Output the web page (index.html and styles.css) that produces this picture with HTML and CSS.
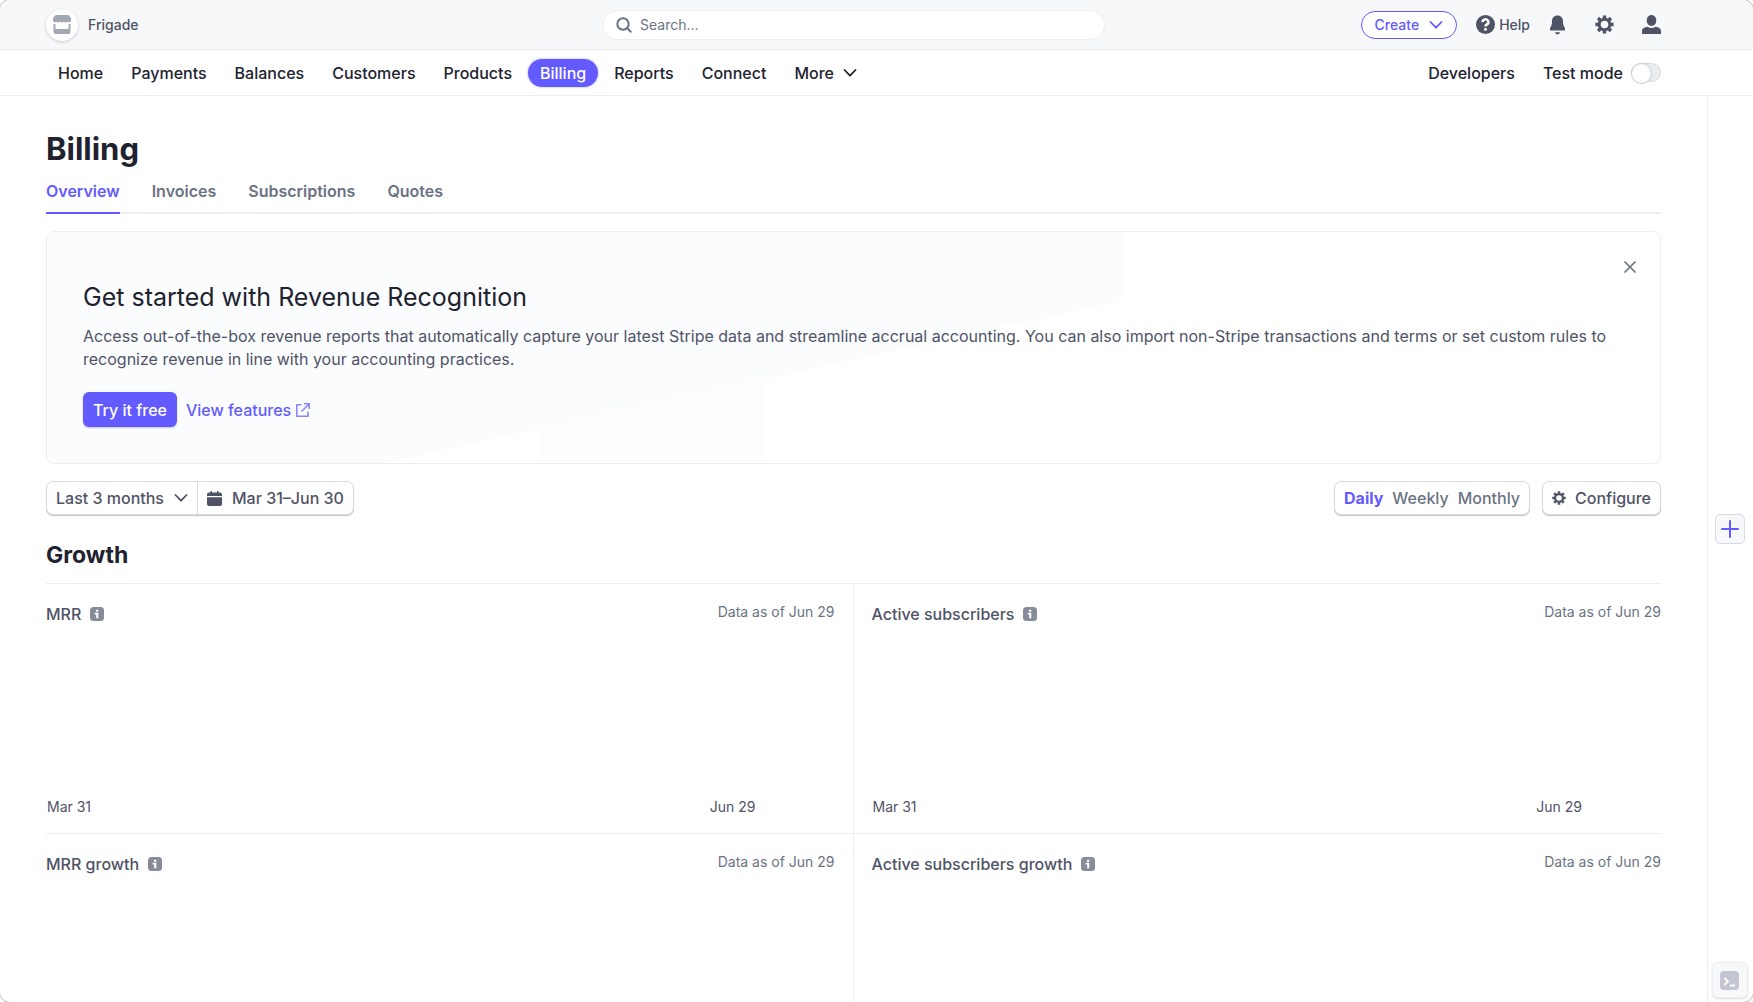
FILE: index.html
```html
<!DOCTYPE html>
<html lang="en">
<head>
<meta charset="utf-8">
<meta name="viewport" content="width=device-width, initial-scale=1">
<title>Billing – Frigade</title>
<link rel="stylesheet" href="styles.css">
</head>
<body>
<svg class="sprite" aria-hidden="true">
  <symbol id="i-gear" viewBox="0 0 20 20">
    <circle cx="10" cy="10" r="5.6" fill="none" stroke="currentColor" stroke-width="3.2"/>
    <g stroke="currentColor" stroke-width="3.6">
      <path d="M10 0.4v3.6M10 16v3.6M0.4 10H4M16 10h3.6M3.2 3.2l2.6 2.6M14.2 14.2l2.6 2.6M3.2 16.8l2.6-2.6M14.2 5.8l2.6-2.6"/>
    </g>
  </symbol>
  <symbol id="i-chevron" viewBox="0 0 14 10">
    <path d="M1.5 2l5.5 5.7L12.5 2" fill="none" stroke="currentColor" stroke-width="1.8" stroke-linecap="round" stroke-linejoin="round"/>
  </symbol>
  <symbol id="i-info" viewBox="0 0 14 14">
    <rect width="14" height="14" rx="3.5" fill="currentColor"/>
    <path d="M6 2.7h2.3v2H6zM4.7 5.8h3.6v5.5H6.2V7.5H4.7z" fill="#fff"/>
  </symbol>
</svg>
<div class="app">
  <header class="topbar">
    <a class="account" href="#">
      <span class="account-logo">
        <svg width="18" height="19" viewBox="0 0 18 19" fill="#a3a8b5"><path d="M2.500 0h13L18 3v2.500a2.200 2.200 0 0 1-3.600 1.200 2.700 2.700 0 0 1-3.600 0 2.700 2.700 0 0 1-3.600 0 2.700 2.700 0 0 1-3.600 0A2.200 2.200 0 0 1 0 5.500V3z"/><path d="M.5 9h2v5h13V9h2v8a2 2 0 0 1-2 2h-13a2 2 0 0 1-2-2z"/></svg>
      </span>
      Frigade
    </a>
    <label class="search">
      <svg width="16" height="16" viewBox="0 0 16 16" fill="none" stroke="#6a7383" stroke-width="2" stroke-linecap="round"><circle cx="7" cy="7" r="5.700"/><path d="M11.200 11.200L14.700 14.700"/></svg>
      <input type="search" placeholder="Search…" aria-label="Search">
    </label>
    <div class="tools">
      <button class="create" type="button">Create <svg width="14" height="10"><use href="#i-chevron"/></svg></button>
      <button class="tool help" type="button">
        <svg width="19" height="19" viewBox="0 0 19 19"><circle cx="9.500" cy="9.500" r="9.500" fill="currentColor"/><path d="M6.600 7.100a2.900 2.700 0 1 1 4.300 2.300c-1 .6-1.400 1-1.400 2" fill="none" stroke="#fff" stroke-width="2.500"/><circle cx="9.500" cy="14.300" r="1.500" fill="#fff"/></svg>
        Help
      </button>
      <button class="tool" type="button" aria-label="Notifications">
        <svg width="19" height="20" viewBox="0 0 19 20" fill="currentColor"><path d="M9.500.5C13 .5 15 3 15 6.300c0 3.500.6 5.200 2 6.700v2.500H2V13c1.400-1.500 2-3.200 2-6.700C4 3 6 .5 9.500.5z"/><path d="M7 17.200h5c-.4 1.400-1.200 2-2.500 2s-2.100-.6-2.500-2z"/></svg>
      </button>
      <button class="tool" type="button" aria-label="Settings"><svg width="19" height="19"><use href="#i-gear"/></svg></button>
      <button class="tool" type="button" aria-label="Profile">
        <svg width="19" height="19" viewBox="0 0 19 19" fill="currentColor"><rect x="4.800" width="9.400" height="11" rx="4.700"/><path d="M0 19v-3c0-2.500 2.500-4 5.500-4.300 2.400 1.700 5.600 1.700 8 0C16.500 12 19 13.500 19 16v3z"/></svg>
      </button>
    </div>
  </header>

  <nav class="nav">
    <a href="#">Home</a>
    <a href="#">Payments</a>
    <a href="#">Balances</a>
    <a href="#">Customers</a>
    <a href="#">Products</a>
    <a class="current" href="#">Billing</a>
    <a href="#">Reports</a>
    <a href="#">Connect</a>
    <button class="more" type="button">More <svg width="14" height="10"><use href="#i-chevron"/></svg></button>
    <a class="developers" href="#">Developers</a>
    <label class="testmode">Test mode <input type="checkbox" role="switch"></label>
  </nav>

  <div class="body">
    <main class="main">
      <h1>Billing</h1>
      <div class="tabs">
        <a class="selected" href="#">Overview</a>
        <a href="#">Invoices</a>
        <a href="#">Subscriptions</a>
        <a href="#">Quotes</a>
      </div>

      <section class="promo">
        <svg class="promo-art" viewBox="0 0 1615 234" preserveAspectRatio="none" aria-hidden="true">
          <path d="M0 0H1076V70L493 199L340 234H0z" fill="#fbfcfe"/>
          <path d="M493 199L720 150V234H493z" fill="#fdfdff"/>
        </svg>
        <div class="promo-text">
          <h2>Get started with Revenue Recognition</h2>
          <p>Access out-of-the-box revenue reports that automatically capture your latest Stripe data and streamline accrual accounting. You can also import non-Stripe transactions and terms or set custom rules to recognize revenue in line with your accounting practices.</p>
          <div class="promo-actions">
            <button class="primary" type="button">Try it free</button>
            <a href="#">View features <svg width="14" height="14" viewBox="0 0 14 14" fill="none" stroke="#8d87ff" stroke-width="1.600"><path d="M5.500 1.800H.8V13.200H12V8.500M8 .8H13.200V6M13 1L5.500 8.500"/></svg></a>
          </div>
        </div>
        <button class="close" type="button" aria-label="Dismiss"><svg width="12" height="12" viewBox="0 0 12 12" stroke="#6a7383" stroke-width="1.700" stroke-linecap="round"><path d="M1 1l10 10M11 1L1 11"/></svg></button>
      </section>

      <div class="filters">
        <div class="range">
          <label class="period">
            <select aria-label="Period"><option>Last 3 months</option></select>
            <svg width="14" height="10"><use href="#i-chevron"/></svg>
          </label>
          <button type="button">
            <svg width="15" height="15" viewBox="0 0 15 15" fill="currentColor"><path d="M2 1.500h1.500V0H5v1.500h5V0h1.500v1.500H13a2 2 0 0 1 2 2V5H0V3.500a2 2 0 0 1 2-2zM0 6.200h15V13a2 2 0 0 1-2 2H2a2 2 0 0 1-2-2z"/></svg>
            Mar 31–Jun 30
          </button>
        </div>
        <div class="interval">
          <button class="on" type="button">Daily</button>
          <button type="button">Weekly</button>
          <button type="button">Monthly</button>
        </div>
        <button class="configure" type="button"><svg width="14" height="14"><use href="#i-gear"/></svg>Configure</button>
      </div>

      <h2 class="section-title">Growth</h2>
      <div class="metrics">
        <section class="metric">
          <div class="metric-head"><h3>MRR</h3><svg width="14" height="14"><use href="#i-info"/></svg><span>Data as of Jun 29</span></div>
          <div class="axis"><span>Mar 31</span><span>Jun 29</span></div>
        </section>
        <section class="metric">
          <div class="metric-head"><h3>Active subscribers</h3><svg width="14" height="14"><use href="#i-info"/></svg><span>Data as of Jun 29</span></div>
          <div class="axis"><span>Mar 31</span><span>Jun 29</span></div>
        </section>
        <section class="metric">
          <div class="metric-head"><h3>MRR growth</h3><svg width="14" height="14"><use href="#i-info"/></svg><span>Data as of Jun 29</span></div>
        </section>
        <section class="metric">
          <div class="metric-head"><h3>Active subscribers growth</h3><svg width="14" height="14"><use href="#i-info"/></svg><span>Data as of Jun 29</span></div>
        </section>
      </div>
    </main>
    <aside class="rail">
      <button class="add" type="button" aria-label="Add app"><svg width="18" height="18" viewBox="0 0 18 18" stroke="#635bff" stroke-width="2" stroke-linecap="round"><path d="M9 1v16M1 9h16"/></svg></button>
      <button class="console" type="button" aria-label="Open shell"><svg width="19" height="19" viewBox="0 0 19 19"><rect width="19" height="19" rx="4" fill="#c4c5d2"/><path d="M4.500 7l3.500 3.500L4.500 14M10 14.500h5" fill="none" stroke="#fff" stroke-width="1.800"/></svg></button>
    </aside>
  </div>
</div>
</body>
</html>
```
FILE: styles.css
```css
* { box-sizing: border-box; }
body {
  margin: 0;
  background: #fff;
  color: #21222f;
  font: 500 16px/24px Inter, "Liberation Sans", sans-serif;
}
h1, h2, h3, p { margin: 0; }
a { color: inherit; text-decoration: none; }
button, input, select { font: inherit; color: inherit; margin: 0; }
button { display: inline-flex; align-items: center; justify-content: center; border: 0; padding: 0; background: none; }
svg { display: block; flex: none; }
.sprite { position: absolute; width: 0; height: 0; }

.app {
  display: flex;
  flex-direction: column;
  min-height: 100vh;
  border-radius: 10px;
  box-shadow: 0 0 0 1px #c8cacf;
  overflow: hidden;
}

.topbar {
  display: grid;
  grid-template-columns: 1fr minmax(200px, 503px) 1fr;
  align-items: center;
  height: 50px;
  padding: 0 92px 0 46px;
  background: #f6f8fa;
  border-bottom: 1px solid #e6e8ee;
  color: #4f5366;
  font-size: 14px;
}
.account { display: flex; align-items: center; gap: 10px; }
.account-logo {
  display: flex;
  align-items: center;
  justify-content: center;
  width: 32px;
  height: 32px;
  border-radius: 50%;
  background: #fff;
  box-shadow: 0 1px 3px rgba(60, 66, 87, .25);
}
.search {
  display: flex;
  align-items: center;
  gap: 8px;
  height: 30px;
  padding: 0 13px;
  border: 1px solid #ebeef1;
  border-radius: 15px;
  background: #fff;
}
.search input { flex: 1; min-width: 0; border: 0; padding: 0; outline: 0; background: none; font-weight: 400; }
.search input::placeholder { color: #6a7383; opacity: 1; }
.tools { display: flex; align-items: center; justify-content: flex-end; gap: 28px; }
.create {
  gap: 10px;
  height: 28px;
  padding: 0 13px;
  margin-right: -9px;
  border: 1px solid #635bff;
  border-radius: 14px;
  background: #fff;
  color: #635bff;
}
.help { gap: 4px; margin-right: -10px; }

.nav {
  display: flex;
  align-items: center;
  gap: 4px;
  height: 46px;
  padding: 0 92px 0 46px;
  border-bottom: 1px solid #ebeef1;
}
.nav a, .more { height: 28px; padding: 0 12px; line-height: 28px; border-radius: 14px; }
.nav .current { background: #635bff; color: #fff; box-shadow: 0 0 2px 1px #d9dcea; }
.more { gap: 9px; }
.developers { margin-left: auto; }
.testmode { display: flex; align-items: center; gap: 8px; padding-left: 12px; }
.testmode input {
  appearance: none;
  width: 30px;
  height: 19px;
  border: 1px solid #d5dbe1;
  border-radius: 10px;
  background: #ebeef1;
}
.testmode input::before {
  content: "";
  display: block;
  width: 19px;
  height: 19px;
  margin: -1px;
  border: 1px solid #c0c8d2;
  border-radius: 50%;
  background: #fff;
}

.body { flex: 1; display: flex; }
.main { flex: 1; min-width: 0; display: flex; flex-direction: column; padding: 33px 46px 0; }
.rail {
  display: flex;
  flex-direction: column;
  align-items: center;
  width: 46px;
  padding: 418px 2px 5px 0;
  border-left: 1px solid #ebeef1;
}
.add { width: 30px; height: 30px; border: 1px solid #d5dbe1; border-radius: 5px; background: #f6f8fa; }
.console {
  width: 34px;
  height: 34px;
  margin-top: auto;
  border-radius: 5px;
  background: #f6f8fa;
  box-shadow: 0 0 0 1px #ebeef1, 0 1px 2px 1px #d5dbe1;
}

h1 { font-size: 31px; line-height: 40px; font-weight: 700; }
.tabs { display: flex; gap: 32px; margin-top: 6px; border-bottom: 2px solid #ebeef1; color: #6a7383; }
.tabs a { height: 39px; padding-top: 4px; margin-bottom: -2px; border-bottom: 2px solid transparent; font-weight: 600; }
.tabs .selected { color: #635bff; border-color: #635bff; }

.promo {
  position: relative;
  margin-top: 17px;
  border: 1px solid #ebeef1;
  border-radius: 8px;
  overflow: hidden;
}
.promo-art { position: absolute; inset: 0; width: 100%; height: 100%; }
.promo-text { position: relative; padding: 48px 36px 36px; color: #4f5366; font-weight: 400; }
.promo h2 { font-size: 25px; line-height: 34px; font-weight: 400; color: #21222f; }
.promo p { margin-top: 11px; line-height: 23px; }
.promo-actions { display: flex; align-items: center; gap: 9px; margin: 21px 0 0; color: #635bff; font-weight: 500; }
.promo-actions a { display: flex; align-items: center; gap: 5px; }
.primary { height: 35px; padding: 0 10px; border-radius: 6px; background: #635bff; color: #fff; box-shadow: 0 1px 2px rgba(60, 66, 87, .3); }
.close { position: absolute; top: 19px; right: 14px; width: 32px; height: 32px; }

.filters { display: flex; gap: 12px; margin-top: 17px; color: #4f5366; }
.range, .interval, .configure {
  display: flex;
  align-items: center;
  height: 34px;
  border: 1px solid #d5dbe1;
  border-radius: 7px;
  background: #fff;
  box-shadow: 0 1px 1px rgba(60, 66, 87, .3);
}
.range { margin-right: auto; }
.period { display: flex; align-items: center; gap: 10px; height: 100%; padding: 0 9px; border-right: 1px solid #d5dbe1; }
.period select { appearance: none; border: 0; padding: 0; outline: 0; background: none; }
.range button { gap: 10px; padding: 0 9px; }
.interval { gap: 9px; padding: 0 9px; color: #6a7383; }
.interval .on { color: #635bff; font-weight: 700; }
.configure { gap: 9px; padding: 0 9px; }

.section-title { margin-top: 25px; font-size: 23px; line-height: 30px; font-weight: 700; }
.metrics {
  flex: 1;
  display: grid;
  grid-template-columns: 1fr 1fr;
  grid-template-rows: 250px minmax(160px, 1fr);
  margin-top: 13px;
}
.metric { display: flex; flex-direction: column; border-top: 1px solid #ebeef1; padding: 18px 0 14px; }
.metric:nth-child(odd) { padding-right: 18px; border-right: 1px solid #ebeef1; }
.metric:nth-child(even) { padding-left: 18px; }
.metric-head { display: flex; align-items: center; gap: 9px; color: #878c9b; }
.metric h3 { font-size: 16px; font-weight: 500; color: #4f5366; }
.metric-head span { margin: -4px 0 0 auto; font-size: 14px; font-weight: 400; color: #6a7383; }
.axis {
  display: flex;
  justify-content: space-between;
  margin-top: auto;
  padding: 0 79px 0 1px;
  font-size: 14px;
  font-weight: 400;
  color: #4f5366;
}
```
